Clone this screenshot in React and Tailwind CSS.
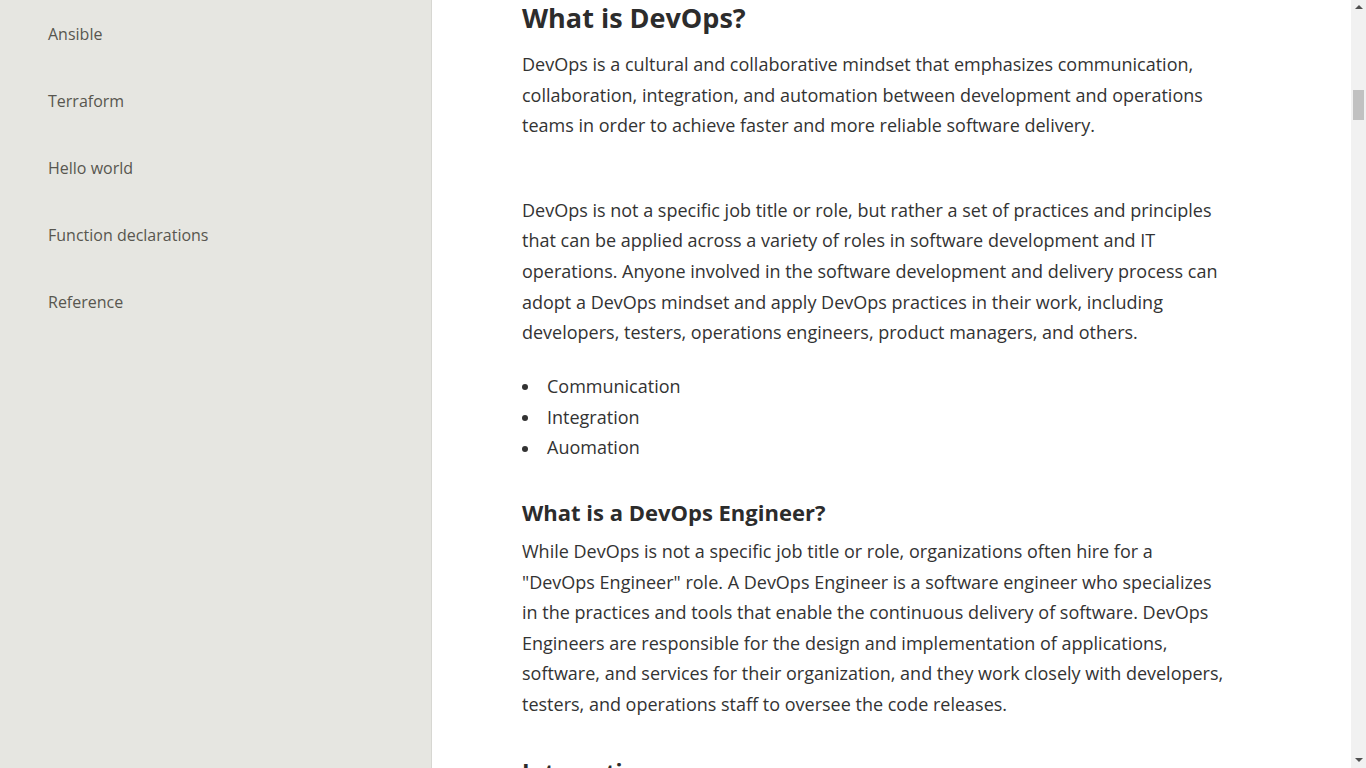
import React from "react";

const navItems = ["Ansible", "Terraform", "Hello world", "Function declarations", "Reference"];

function Bullet({ children }) {
  return (
    <li className="flex items-center">
      <span className="flex w-[25px] shrink-0 items-center pt-[2px]">
        <span className="block h-[6px] w-[6px] rounded-full bg-[#333333]" />
      </span>
      <span>{children}</span>
    </li>
  );
}

export default function App() {
  return (
    <div
      className="flex h-[768px] w-[1366px] overflow-hidden bg-white"
      style={{ fontFamily: '"Open Sans", "Noto Sans", sans-serif' }}
    >
      <aside className="w-[432px] shrink-0 border-r border-[#d7d7d2] bg-[#e6e6e1]">
        <ul>
          {navItems.map((item) => (
            <li key={item} className="flex h-[67px] items-center pl-12 text-[16px] leading-6 text-[#58564f]">
              {item}
            </li>
          ))}
        </ul>
      </aside>

      <main className="min-w-0 flex-1 pl-[90px] text-[#333333]">
        <div className="w-[705px]">
          <h1 className="text-[27px] font-bold leading-[36px] text-[#2c2c2c]">What is DevOps?</h1>
          <p className="mt-[13px] mb-[23.4px] text-[18px] leading-[30.6px]">
            DevOps is a cultural and collaborative mindset that emphasizes communication, collaboration,
            integration, and automation between development and operations teams in order to achieve faster and
            more reliable software delivery.
            <br />
            <br />
          </p>
          <p className="mb-[23.4px] text-[18px] leading-[30.6px]">
            DevOps is not a specific job title or role, but rather a set of practices and principles that can be
            applied across a variety of roles in software development and IT operations. Anyone involved in the
            software development and delivery process can adopt a DevOps mindset and apply DevOps practices in
            their work, including developers, testers, operations engineers, product managers, and others.
          </p>
          <ul className="text-[18px] leading-[30.6px]">
            <Bullet>Communication</Bullet>
            <Bullet>Integration</Bullet>
            <Bullet>Auomation</Bullet>
          </ul>
          <h3 className="mt-[34px] mb-[9px] text-[22px] font-bold leading-[30px] text-[#2c2c2c]">
            What is a DevOps Engineer?
          </h3>
          <p className="mb-[23.4px] text-[18px] leading-[30.6px]">
            While DevOps is not a specific job title or role, organizations often hire for a "DevOps Engineer"
            role. A DevOps Engineer is a software engineer who specializes in the practices and tools that enable
            the continuous delivery of software. DevOps Engineers are responsible for the design and implementation
            of applications, software, and services for their organization, and they work closely with developers,
            testers, and operations staff to oversee the code releases.
          </p>
          <h3 className="mt-[38px] mb-[9px] text-[23px] font-bold leading-[30px] text-[#2c2c2c]">Integration</h3>
        </div>
      </main>

      <div className="flex w-[15px] shrink-0 flex-col items-center bg-[#f1f1f1]">
        <div className="flex h-[15px] w-full items-center justify-center">
          <svg width="8" height="5" viewBox="0 0 8 5">
            <path d="M4 0 L8 4 L0 4 Z" fill="#505050" />
          </svg>
        </div>
        <div className="mt-[75px] h-[30px] w-[11px] bg-[#c1c1c1]" />
        <div className="flex-1" />
        <div className="flex h-[15px] w-full items-center justify-center">
          <svg width="8" height="5" viewBox="0 0 8 5">
            <path d="M0 0 L8 0 L4 4 Z" fill="#505050" />
          </svg>
        </div>
      </div>
    </div>
  );
}
